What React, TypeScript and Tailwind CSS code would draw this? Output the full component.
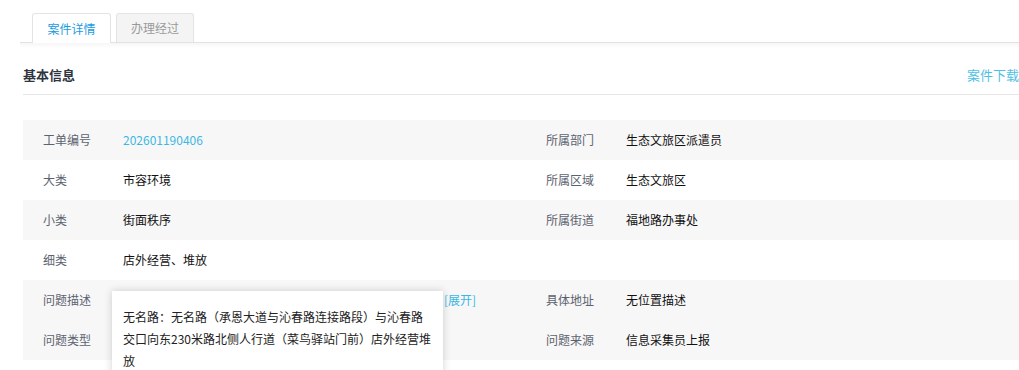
import React from 'react';

const ROWS = [
  { l: '工单编号', v: '202601190406', link: true, rl: '所属部门', rv: '生态文旅区派遣员', grey: true },
  { l: '大类', v: '市容环境', rl: '所属区域', rv: '生态文旅区', grey: false },
  { l: '小类', v: '街面秩序', rl: '所属街道', rv: '福地路办事处', grey: true },
  { l: '细类', v: '店外经营、堆放', rl: '', rv: '', grey: false },
];

const DESC = '无名路：无名路（承恩大道与沁春路连接路段）与沁春路交口向东230米路北侧人行道（菜鸟驿站门前）店外经营堆放';

const Cell = ({ label, value, link }: { label: string; value: React.ReactNode; link?: boolean }) => (
  <div className="flex w-[503px] items-center pl-[20px]">
    <span className="w-[80px] shrink-0 text-[#5c6370]">{label}</span>
    <span className={link ? 'text-[#3cb7e4]' : 'text-[#111]'}>{value}</span>
  </div>
);

export default function App() {
  return (
    <div
      className="relative h-[370px] w-[1019px] overflow-hidden bg-white text-[12px]"
      style={{ fontFamily: '"Noto Sans CJK SC", "Noto Sans", sans-serif' }}
    >
      {/* tabs */}
      <div className="ml-[20px] mt-[13px] flex w-[1040px] border-b border-[#e2e2e2] pl-[12px]">
        <div className="-mb-px flex h-[30px] w-[79px] items-center justify-center rounded-t-[3px] border border-b-0 border-[#e4e4e4] bg-white text-[#1a9be2]">
          案件详情
        </div>
        <div className="ml-[5px] flex h-[29px] w-[78px] items-center justify-center rounded-t-[3px] border border-b-0 border-[#e4e4e4] bg-[#f4f4f4] text-[#9a9a9a]">
          办理经过
        </div>
      </div>
      <div className="ml-[20px] h-[5px] w-[1040px] bg-gradient-to-b from-[#f6f6f6] to-white" />

      {/* header */}
      <div className="ml-[23px] mt-[17px] flex w-[996px] items-center justify-between pb-[9px]">
        <span className="text-[13px] font-bold text-[#2e3440]">基本信息</span>
        <span className="text-[13px] text-[#4fbfe6]">案件下载</span>
      </div>
      <div className="ml-[23px] h-px w-[1040px] bg-[#e6e6e6]" />

      {/* table */}
      <div className="ml-[23px] mt-[25px] w-[1006px]">
        {ROWS.map((r) => (
          <div key={r.l} className={`flex h-[40px] ${r.grey ? 'bg-[#f7f7f7]' : 'bg-white'}`}>
            <Cell label={r.l} value={r.v} link={r.link} />
            {r.rl && <Cell label={r.rl} value={r.rv} />}
          </div>
        ))}
        <div className="flex h-[40px] bg-[#f7f7f7]">
          <div className="flex w-[503px] items-center pl-[20px]">
            <span className="w-[80px] shrink-0 text-[#5c6370]">问题描述</span>
            <span className="w-[321px] text-[#111]">无名路：无名路（承恩大道与沁春路连接...</span>
            <span className="text-[#3cb7e4]">[展开]</span>
          </div>
          <Cell label="具体地址" value="无位置描述" />
        </div>
        <div className="flex h-[40px] bg-[#f7f7f7]">
          <Cell label="问题类型" value="" />
          <Cell label="问题来源" value="信息采集员上报" />
        </div>
      </div>

      {/* tooltip */}
      <div className="absolute left-[112px] top-[291px] w-[331px] bg-white pb-[10px] pl-[11px] pr-[10px] pt-[15px] leading-[22px] text-[#222] shadow-[0_0_8px_rgba(0,0,0,0.18)]">
        {DESC}
      </div>
    </div>
  );
}
